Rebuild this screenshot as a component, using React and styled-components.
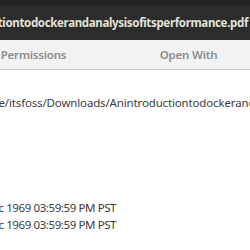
import styled, { createGlobalStyle } from "styled-components";

const GlobalStyle = createGlobalStyle`
  html, body {
    margin: 0;
    padding: 0;
    background: #ffffff;
  }
  body {
    font-family: "Noto Sans", "Open Sans", "DejaVu Sans", sans-serif;
  }
`;

const Viewport = styled.div`
  /* Box */
  width: 250px;
  height: 250px;

  /* Style */
  overflow: hidden;
  background: #ffffff;
`;

const TitleBar = styled.header`
  /* Layout */
  display: flex;
  justify-content: flex-end;
  align-items: center;

  /* Box */
  height: 40px;
  padding-right: 2px;
  box-sizing: border-box;
  border-top: 5px solid #232323;

  /* Style */
  background: #2c2c2c;
`;

const Title = styled.h1`
  /* Font */
  margin: 0;
  font-size: 11.5px;
  font-weight: 700;
  color: #e3e0da;
  white-space: nowrap;
  letter-spacing: -0.34px;
`;

const TabBar = styled.nav`
  /* Layout */
  display: grid;
  grid-template-columns: repeat(3, 155px);
  align-items: center;

  /* Box */
  height: 29px;
  margin-left: -199px;
  border-bottom: 1px solid #cdcdcd;

  /* Style */
  background: #f2f2f2;
`;

const Tab = styled.span`
  /* Font */
  font-size: 11.5px;
  font-weight: 600;
  color: ${(props) => (props.active ? "#3c3c3c" : "#8c8c8c")};
  text-align: center;
  white-space: nowrap;
  letter-spacing: -0.2px;
`;

const Body = styled.section`
  /* Layout */
  display: flex;
  flex-direction: column;

  /* Box */
  padding-top: 24px;
`;

const Value = styled.div`
  /* Font */
  font-size: 11.5px;
  color: #3c3c3c;
  white-space: nowrap;
  line-height: 17px;
  letter-spacing: ${(props) => (props.tight ? "-0.4px" : "-0.15px")};

  /* Box */
  margin-left: ${(props) => props.shift}px;
  margin-top: ${(props) => props.gap || 0}px;
`;

export default function App() {
  return (
    <>
      <GlobalStyle />
      <Viewport>
        <TitleBar>
          <Title>Anintroductiontodockerandanalysisofitsperformance.pdf</Title>
        </TitleBar>
        <TabBar>
          <Tab active>Basic</Tab>
          <Tab>Permissions</Tab>
          <Tab>Open With</Tab>
        </TabBar>
        <Body>
          <Value shift={-30}>/home/itsfoss/Downloads/Anintroductiontodockerandanalysisofitsperformance.pdf</Value>
          <Value tight shift={-56} gap={88}>Wed 31 Dec 1969 03:59:59 PM PST</Value>
          <Value tight shift={-56}>Wed 31 Dec 1969 03:59:59 PM PST</Value>
        </Body>
      </Viewport>
    </>
  );
}
